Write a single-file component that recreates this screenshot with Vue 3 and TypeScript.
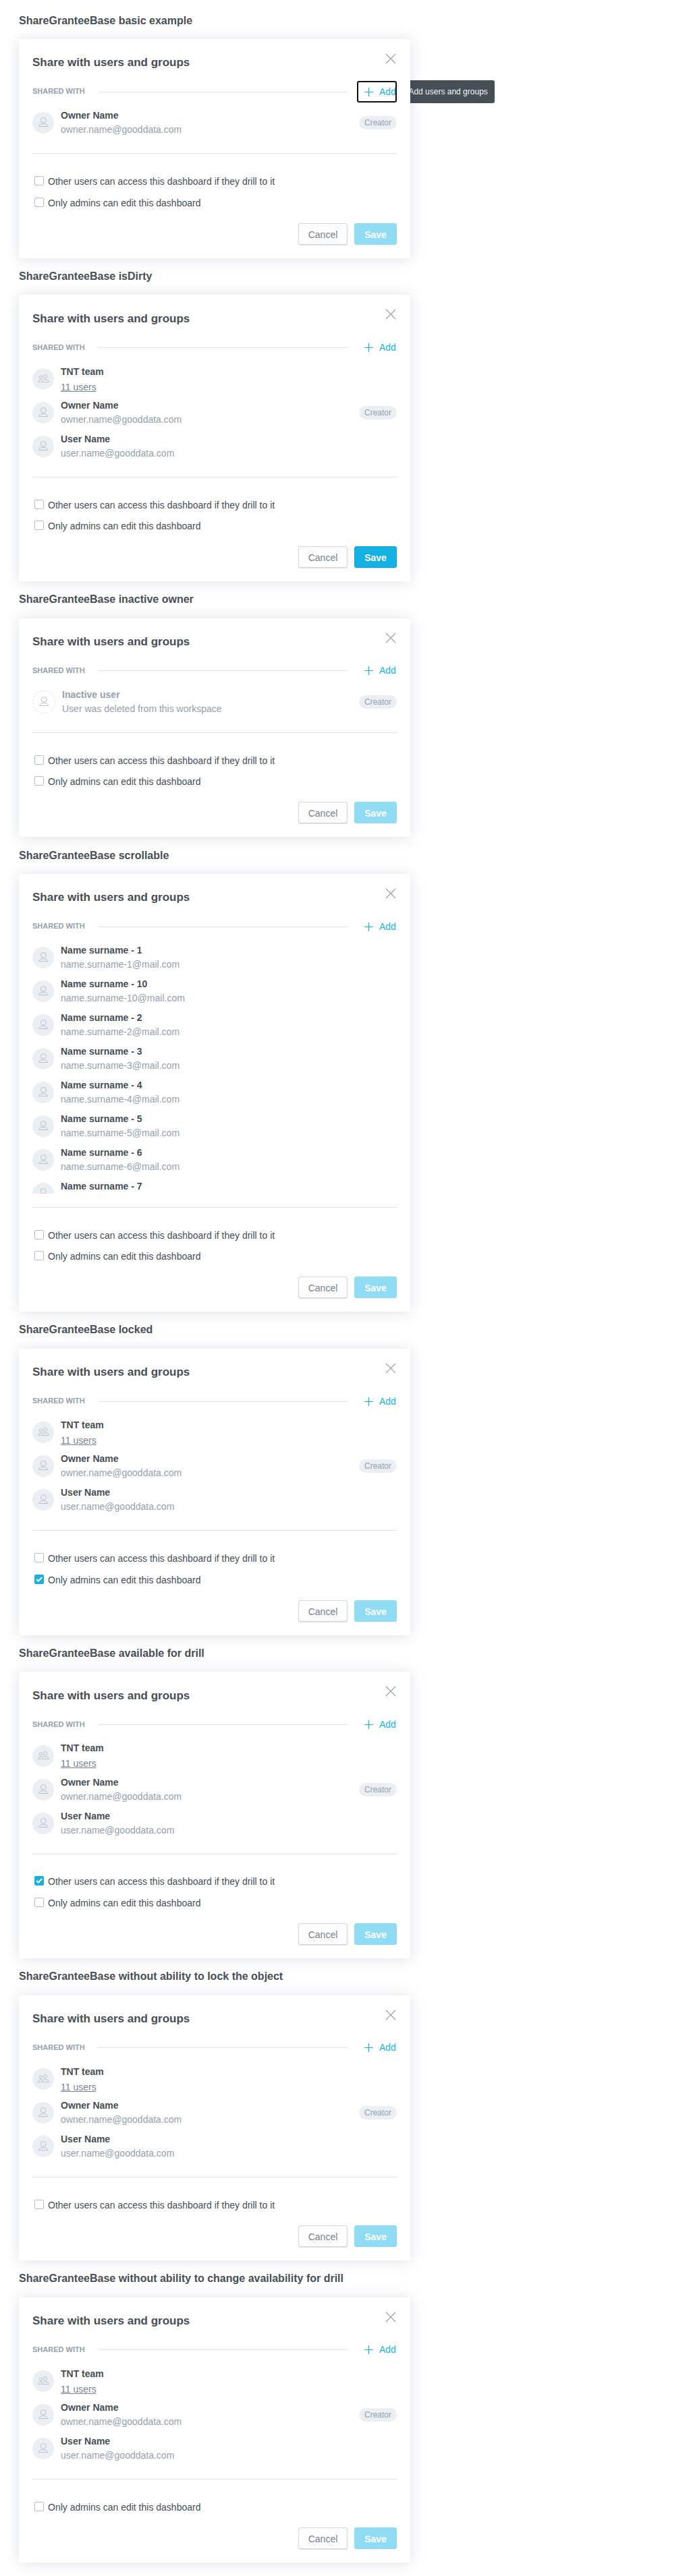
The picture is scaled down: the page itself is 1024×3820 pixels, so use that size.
<script setup lang="ts">
interface Grantee { kind: 'user' | 'group' | 'inactive'; name: string; sub: string; creator?: boolean }
interface Example {
  title: string
  grantees: Grantee[]
  drill?: boolean
  lock?: boolean
  dirty?: boolean
  focused?: boolean
  scrollable?: boolean
}

const owner: Grantee = { kind: 'user', name: 'Owner Name', sub: 'owner.name@gooddata.com', creator: true }
const user: Grantee = { kind: 'user', name: 'User Name', sub: 'user.name@gooddata.com' }
const team: Grantee = { kind: 'group', name: 'TNT team', sub: '11 users' }
const inactive: Grantee = { kind: 'inactive', name: 'Inactive user', sub: 'User was deleted from this workspace', creator: true }
const many: Grantee[] = [1, 10, 2, 3, 4, 5, 6, 7].map((n) => ({
  kind: 'user', name: `Name surname - ${n}`, sub: `name.surname-${n}@mail.com`,
}))

const examples: Example[] = [
  { title: 'basic example', grantees: [owner], drill: false, lock: false, focused: true },
  { title: 'isDirty', grantees: [team, owner, user], drill: false, lock: false, dirty: true },
  { title: 'inactive owner', grantees: [inactive], drill: false, lock: false },
  { title: 'scrollable', grantees: many, drill: false, lock: false, scrollable: true },
  { title: 'locked', grantees: [team, owner, user], drill: false, lock: true },
  { title: 'available for drill', grantees: [team, owner, user], drill: true, lock: false },
  { title: 'without ability to lock the object', grantees: [team, owner, user], drill: false },
  { title: 'without ability to change availability for drill', grantees: [team, owner, user], lock: false },
]

function options(e: Example) {
  return [
    { label: 'Other users can access this dashboard if they drill to it', value: e.drill },
    { label: 'Only admins can edit this dashboard', value: e.lock },
  ].filter((o) => o.value !== undefined)
}
</script>

<template>
  <main class="page">
    <section v-for="e in examples" :key="e.title" class="example">
      <h4 class="example-title">ShareGranteeBase {{ e.title }}</h4>
      <div class="stage">
        <div v-if="e.focused" class="tooltip">Add users and groups</div>
        <div class="dialog">
          <header class="dialog-header">
            <h3>Share with users and groups</h3>
            <button class="close" aria-label="Close">
              <svg width="16" height="16" viewBox="0 0 16 16"><path d="M1 1 L15 15 M15 1 L1 15" /></svg>
            </button>
          </header>
          <div class="shared">
            <span class="shared-label">SHARED WITH</span>
            <span class="rule"></span>
            <button class="add" :class="{ focused: e.focused }">
              <svg width="13" height="13" viewBox="0 0 13 13"><path d="M6.5 0 V13 M0 6.5 H13" /></svg>
              <span class="add-label">Add</span>
            </button>
          </div>
          <div class="list">
            <div class="rows" :class="{ scrollable: e.scrollable }">
              <div v-for="g in e.grantees" :key="g.name" class="grantee" :class="g.kind">
                <span class="avatar">
                  <svg v-if="g.kind === 'group'" width="18" height="14" viewBox="0 0 18 14">
                    <circle cx="12" cy="3" r="2.6" />
                    <path d="M6.8 11.5 C6.8 6.3 17.5 6.3 17.5 11.5 Z" />
                    <circle cx="5.5" cy="4.3" r="2.1" />
                    <path d="M7.4 8.2 C5 7.4 1.5 8.4 1.5 11.5 H5.4" />
                  </svg>
                  <svg v-else width="16" height="16" viewBox="0 0 16 16">
                    <circle cx="8.3" cy="4.3" r="3.9" />
                    <path d="M1.6 13.5 C1.6 8.2 14.6 8.2 14.6 13.5 Z" />
                  </svg>
                </span>
                <div class="who">
                  <div class="name">{{ g.name }}</div>
                  <div class="sub"><span>{{ g.sub }}</span></div>
                </div>
                <span v-if="g.creator" class="badge">Creator</span>
              </div>
            </div>
          </div>
          <div class="options">
            <label v-for="o in options(e)" :key="o.label" class="option">
              <span class="box" :class="{ checked: o.value }">
                <svg v-if="o.value" width="14" height="14" viewBox="0 0 14 14"><path d="M3.1 7 L5.8 9.6 L11.2 4" /></svg>
              </span>
              <span class="option-label">{{ o.label }}</span>
            </label>
          </div>
          <footer class="actions">
            <button class="cancel">Cancel</button>
            <button class="save" :class="{ active: e.dirty }">Save</button>
          </footer>
        </div>
      </div>
    </section>
  </main>
</template>

<style>
body { background: #fff; }
</style>

<style scoped>
.page {
  box-sizing: border-box;
  height: 3820px;
  overflow: hidden;
  padding: 19.5px 28px 0;
  font: 14px/20px "Liberation Sans", Arial, sans-serif;
  color: #464e56;
}
button { font: inherit; margin: 0; padding: 0; border: 0; background: none; }
h3, h4 { margin: 0; font-weight: 700; }
svg { display: block; flex: none; fill: none; }
.example { margin-bottom: 16.2px; }
.example-title { font-size: 16px; line-height: 21px; padding-bottom: 17.6px; }
.stage { position: relative; width: 580px; }
.dialog {
  box-sizing: border-box;
  position: relative;
  z-index: 1;
  padding: 20px;
  border-radius: 3px;
  background: #fff;
  box-shadow: 0 1px 20px rgba(20, 56, 93, 0.15);
}
.tooltip {
  box-sizing: border-box;
  position: absolute;
  left: 567px;
  top: 61.1px;
  width: 138px;
  height: 34px;
  padding-left: 10.4px;
  border-radius: 3px;
  background: #464e56;
  color: #f5f6f7;
  font-size: 12px;
  line-height: 34px;
  white-space: nowrap;
}
.dialog-header { display: flex; justify-content: space-between; height: 41.1px; }
.dialog-header h3 { padding-top: 0.2px; font-size: 17px; line-height: 29px; }
.close { width: 16px; height: 16px; margin: 0.8px 1px 0 0; }
.close svg { stroke: #94a1ad; stroke-width: 1.1; }
.shared { display: flex; align-items: center; height: 34px; }
.shared-label { width: 98px; padding-bottom: 2px; font-size: 11px; font-weight: 700; color: #94a1ad; }
.rule { width: 369px; height: 1px; background: #dde4eb; }
.add {
  display: flex;
  align-items: center;
  gap: 9px;
  box-sizing: border-box;
  width: 59px;
  height: 32px;
  margin-left: auto;
  padding-left: 11px;
  color: #14b2e2;
}
.add svg { stroke: #14b2e2; stroke-width: 1.2; }
.add-label { padding-bottom: 0.8px; }
.add.focused { outline: 2px solid #101010; outline-offset: -2px; border-radius: 3px; }
.list { padding-bottom: 20px; border-bottom: 1px solid #dde4eb; }
.rows { padding-top: 4px; }
.rows.scrollable { box-sizing: border-box; height: 378.6px; overflow: hidden; }
.grantee { display: flex; align-items: center; height: 50px; }
.avatar {
  box-sizing: border-box;
  display: flex;
  align-items: center;
  justify-content: center;
  width: 32px;
  height: 32px;
  border-radius: 50%;
  background: #ebeff4;
}
.avatar svg { stroke: #b0beca; stroke-width: 0.9; }
.inactive .avatar { width: 34px; height: 34px; border: 1px dashed #dde4eb; background: none; }
.who { flex: 1; margin-left: 10px; line-height: 21px; }
.name { font-weight: 700; }
.sub, .inactive .name { color: #94a1ad; }
.group .sub { margin-bottom: -4.4px; line-height: 25.4px; color: #778491; text-decoration: underline; }
.badge {
  height: 20px;
  padding: 0 8px;
  border-radius: 10px;
  background: #ebeff4;
  color: #94a1ad;
  font-size: 12px;
  line-height: 20px;
}
.options { padding-top: 24.3px; }
.option { display: flex; align-items: center; height: 31.4px; padding-left: 3px; }
.option-label { padding-top: 2px; }
.box {
  box-sizing: border-box;
  width: 14px;
  height: 14px;
  margin-right: 6px;
  border: 1px solid #b0beca;
  border-radius: 2px;
}
.box.checked { border: 0; background: #14b2e2; }
.box svg { stroke: #fff; stroke-width: 2; }
.actions { display: flex; justify-content: flex-end; gap: 10px; padding-top: 15.4px; }
.actions button { box-sizing: border-box; height: 32px; padding-top: 2.2px; border-radius: 3px; }
.actions .cancel {
  width: 73px;
  border: 1px solid #ccd8e2;
  background: #fcfcfd;
  color: #778491;
  box-shadow: 0 1px 1px rgba(20, 56, 93, 0.15);
}
.actions .save { width: 63px; background: #90dcf5; color: #fff; font-weight: 700; }
.actions .save.active {
  border: 1px solid #13a1cd;
  background: #14b2e2;
  box-shadow: 0 1px 1px rgba(20, 56, 93, 0.15);
}
</style>
